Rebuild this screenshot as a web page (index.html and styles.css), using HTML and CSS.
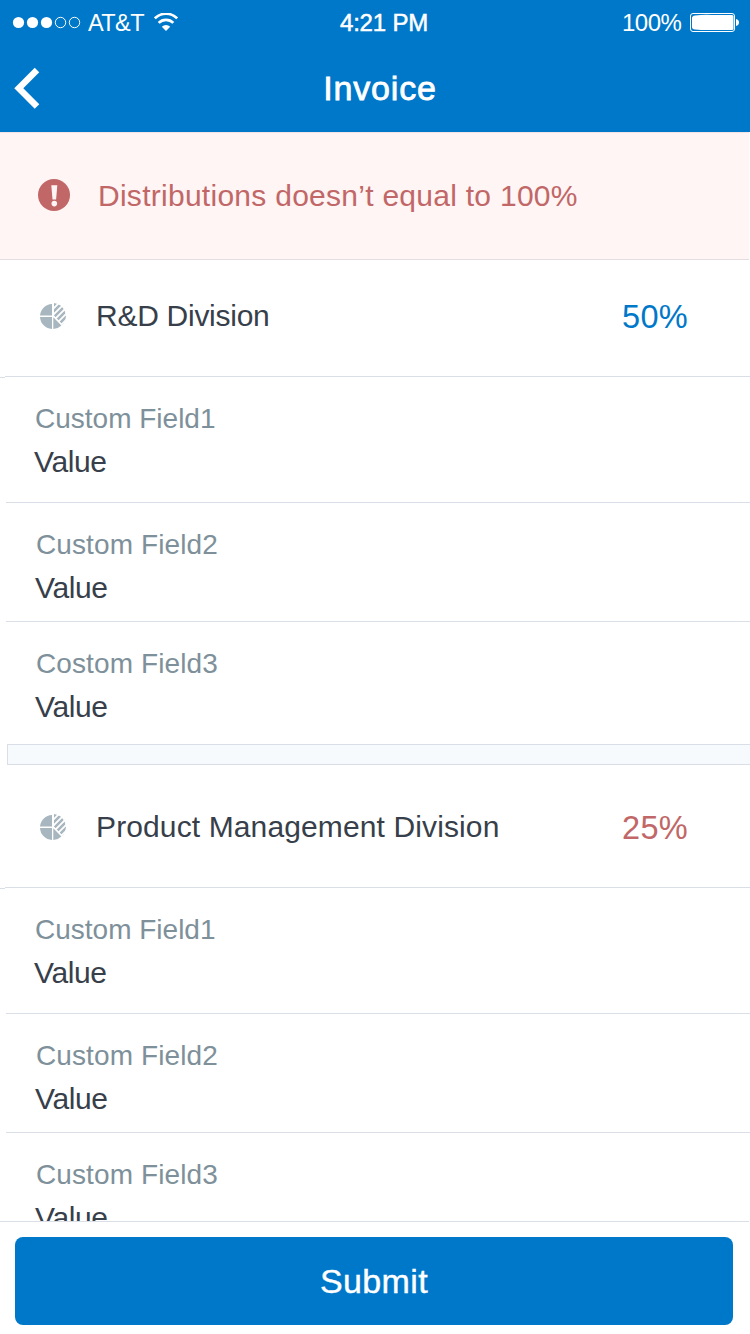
FILE: index.html
```html
<!DOCTYPE html>
<html lang="en">
<head>
<meta charset="utf-8">
<title>Invoice</title>
<link rel="stylesheet" href="styles.css">
</head>
<body>
<svg class="defs" width="0" height="0" aria-hidden="true">
  <defs>
    <clipPath id="wedge"><path d="M14 0V12.5L22.8 21.8A13.5 13.5 0 0 0 14 0Z"/></clipPath>
    <symbol id="pie" viewBox="0 0 27 27">
      <path d="M12 1V12.6H0A12.6 12.6 0 0 1 12 1ZM0 14H12V26A12.6 12.6 0 0 1 0 14ZM13.3 14.2L21.4 22.4A12.6 12.6 0 0 1 13.3 26Z" fill="#a8b6bf"/>
      <g clip-path="url(#wedge)" stroke="#a8b6bf" stroke-width="2.6">
        <path d="M10 6L19 -3M10 12L24 -2M10 18L29 -1M14 20L32 2M16 24L32 8M18 28L32 14"/>
      </g>
    </symbol>
  </defs>
</svg>
<header class="header">
  <div class="status">
    <svg class="signal" width="69" height="14" viewBox="0 0 69 14">
      <g fill="#fff"><circle cx="6.5" cy="7.5" r="5.6"/><circle cx="20.5" cy="7.5" r="5.6"/><circle cx="34.5" cy="7.5" r="5.6"/></g>
      <g fill="none" stroke="#fff"><circle cx="48.5" cy="7.5" r="5.2"/><circle cx="62.5" cy="7.5" r="5.2"/></g>
    </svg>
    <span class="carrier">AT&amp;T</span>
    <svg class="wifi" width="24" height="19" viewBox="0 0 24 19">
      <g fill="none" stroke="#fff" stroke-width="2.7">
        <path d="M0.8 5.4A15.8 15.8 0 0 1 23.2 5.4"/>
        <path d="M4.7 9.9A10.3 10.3 0 0 1 19.3 9.9"/>
      </g>
      <path d="M7.8 13.7A6 6 0 0 1 16.2 13.7L12 18Z" fill="#fff"/>
    </svg>
    <span class="time">4:21 PM</span>
    <span class="charge">100%</span>
    <svg class="battery" width="50" height="20" viewBox="0 0 50 20">
      <rect x="0.5" y="0.5" width="44" height="18" rx="2.5" fill="none" stroke="#fff"/>
      <path d="M5 2.5Q14 1.5 22 2H42Q43.5 2 43.5 3.5V15.5Q43.5 17 42 17H22Q14 17.4 5 16.5Q2 16 2 14V5Q2 3 5 2.5Z" fill="#fff"/>
      <path d="M46 6Q49 6.6 49 9.5T46 13Z" fill="#fff"/>
    </svg>
  </div>
  <nav class="nav">
    <svg class="back" width="26" height="42" viewBox="0 0 26 42"><path d="M23 3L4.8 21.2L23 39.5" fill="none" stroke="#fff" stroke-width="6.4"/></svg>
    <h1 class="title">Invoice</h1>
  </nav>
</header>
<div class="alert">
  <svg class="alert-icon" width="32" height="32" viewBox="0 0 32 32"><circle cx="16" cy="16" r="16" fill="#c16767"/><path d="M13.3 6.3H19.3L18.1 20.5H14.5Z" fill="#fff5f4"/><circle cx="16.3" cy="24.6" r="2.8" fill="#fff5f4"/></svg>
  <span class="alert-text">Distributions doesn’t equal to 100%</span>
</div>
<main class="list">
  <section>
    <div class="division">
      <svg class="pie" width="27" height="27"><use href="#pie"/></svg>
      <span class="name rd">R&amp;D Division</span>
      <span class="percent">50%</span>
    </div>
    <div class="field first"><div class="label">Custom Field1</div><div class="value">Value</div></div>
    <div class="field"><div class="label">Custom Field2</div><div class="value">Value</div></div>
    <div class="field last"><div class="label">Costom Field3</div><div class="value">Value</div></div>
  </section>
  <div class="separator"></div>
  <section>
    <div class="division tall">
      <svg class="pie" width="27" height="27"><use href="#pie"/></svg>
      <span class="name">Product Management Division</span>
      <span class="percent over">25%</span>
    </div>
    <div class="field first"><div class="label">Custom Field1</div><div class="value">Value</div></div>
    <div class="field"><div class="label">Custom Field2</div><div class="value">Value</div></div>
    <div class="field last"><div class="label">Custom Field3</div><div class="value">Value</div></div>
  </section>
</main>
<footer class="footer"><button class="submit">Submit</button></footer>
</body>
</html>
```
FILE: styles.css
```css
* { box-sizing: border-box; }
body {
  margin: 0;
  width: 750px;
  height: 1334px;
  overflow: hidden;
  display: flex;
  flex-direction: column;
  background: #fff;
  color: #37404a;
  font-family: "Liberation Sans", Arial, sans-serif;
}
svg { display: block; flex: none; }
.defs { position: absolute; }
.header { flex: none; height: 132px; background: #0078c9; color: #fff; }
.status {
  height: 46px;
  display: grid;
  grid-template-columns: 69px 73px 24px 1fr 68px 50px;
  padding-left: 12px;
  padding-right: 10px;
  font-size: 24px;
  line-height: 46px;
  white-space: nowrap;
}
.signal { margin-top: 15px; }
.carrier { margin-left: 7px; font-size: 23.5px; letter-spacing: -0.6px; }
.wifi { margin: 13px 0 0 0; }
.time { margin-left: 162px; font-size: 24px; letter-spacing: -0.2px; -webkit-text-stroke: 0.5px #fff; }
.charge { letter-spacing: -0.5px; }
.battery { margin: 13px 0 0 0; }
.nav {
  height: 86px;
  display: grid;
  grid-template-columns: 60px 1fr 50px;
}
.back { margin: 21px 0 0 14px; }
.title {
  margin: 0;
  text-align: center;
  font-size: 34px;
  font-weight: 400;
  line-height: 84px;
  letter-spacing: 0.8px;
  -webkit-text-stroke: 0.8px #fff;
}
.alert {
  flex: none;
  width: 749px;
  height: 128px;
  display: flex;
  padding: 0 38px;
  border-top: 1px solid #f3e3e6;
  border-bottom: 1px solid #e3dce1;
  background: #fff5f4;
  color: #c16767;
}
.alert-icon { margin-top: 46px; }
.alert-text { margin-left: 28px; font-size: 30px; line-height: 126px; letter-spacing: 0.27px; white-space: nowrap; }
.list { flex: 1; min-height: 0; overflow: hidden; }
.division {
  height: 117px;
  display: flex;
  padding: 32px 62px 0 40px;
  line-height: 48px;
  background: linear-gradient(#dadfe7, #dadfe7) 5px 100% / 750px 1px no-repeat;
}
.tall { height: 123px; padding-top: 38px; }
.pie { margin-top: 11px; }
.name { margin-left: 29px; font-size: 30px; letter-spacing: 0.12px; white-space: nowrap; }
.rd { letter-spacing: -0.27px; }
.percent { margin: 1px 0 0 auto; font-size: 32.5px; letter-spacing: 0.3px; color: #0078c9; }
.over { color: #c16767; }
.field {
  height: 119px;
  margin-left: 6px;
  padding: 20px 0 0 29px;
  border-bottom: 1px solid #dadfe7;
}
.first {
  height: 126px;
  margin-left: 0;
  padding-left: 34px;
  border-bottom: 0;
  background:
    linear-gradient(#dadfe7, #dadfe7) 0 0 / 5px 1px no-repeat,
    linear-gradient(#dadfe7, #dadfe7) 6px 100% / 750px 1px no-repeat;
}
.last { height: 122px; border-bottom: 0; }
.label { padding-left: 1px; font-size: 28px; line-height: 44px; letter-spacing: 0.1px; color: #7e909a; }
.first .label { letter-spacing: 0; }
.value { font-size: 30px; line-height: 42px; letter-spacing: -0.4px; }
.separator { height: 21px; margin-left: 7px; border: 1px solid #dadfe7; border-right: 0; background: #f6fafd; }
.footer { flex: none; width: 749px; height: 113px; padding: 15px 16px 0 15px; border-top: 1px solid #dadfe7; background: #fff; }
.submit {
  display: block;
  width: 718px;
  height: 88px;
  padding: 0;
  border: 0;
  border-radius: 8px;
  background: #0078c9;
  color: #fff;
  font: 34px/88px "Liberation Sans", Arial, sans-serif;
  letter-spacing: 0.4px;
  -webkit-text-stroke: 0.4px #fff;
}
```
